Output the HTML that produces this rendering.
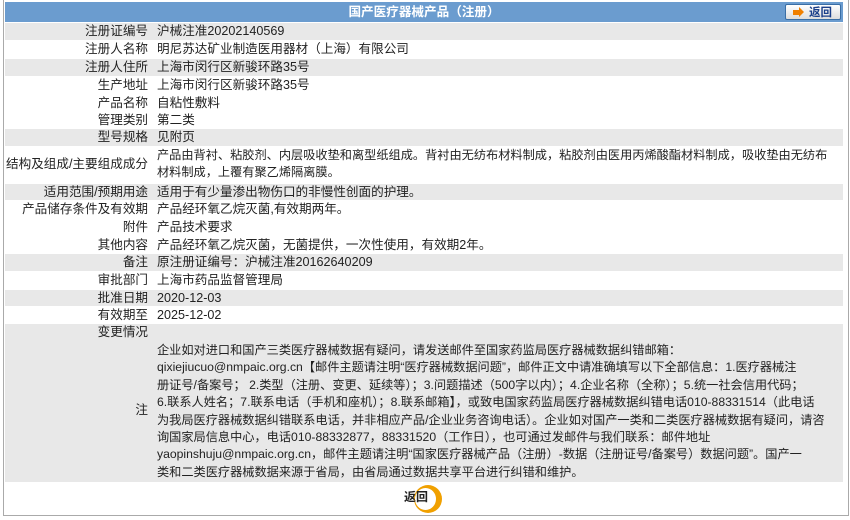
<!DOCTYPE html>
<html><head><meta charset="utf-8"><style>
body{margin:0;width:850px;height:520px;background:#fff;font-family:"Liberation Sans","Noto Sans CJK SC",sans-serif;font-size:12.6px;color:#222;position:relative;overflow:hidden}
.frame{position:absolute;left:3px;top:0;width:844px;height:515px;border-left:1px solid #aaa;border-right:1px solid #aaa;border-bottom:1px solid #aaa}
.hdr{position:absolute;left:5px;top:2px;width:838px;height:20px;background:#6b9ccf;color:#fff;font-weight:bold;text-align:center;line-height:20px;font-size:12.6px}
.btn{position:absolute;right:2px;top:2px;width:56px;height:16px;border:1px solid #3a6ea5;border-radius:2px;background:linear-gradient(#fff,#ddd);color:#1a3f8a;font-weight:bold;font-size:11.5px;line-height:16px;text-align:right;padding-right:8px;box-sizing:border-box}
.btn:before{content:"";position:absolute;left:7px;top:5px;width:6px;height:5px;background:#f08000}
.btn:after{content:"";position:absolute;left:13px;top:2px;border-left:5px solid #f08000;border-top:5.5px solid transparent;border-bottom:5.5px solid transparent}
.r{position:absolute;left:5px;width:838px;line-height:17.4px}
.g{background:#e8e8e8}
.l{position:absolute;left:0;width:143px;text-align:right;white-space:nowrap}
.v{position:absolute;left:152px;width:685px;white-space:nowrap}
.s{font-size:12.2px}
.ret{position:absolute;left:404px;top:488px;font-weight:bold;font-size:12px;color:#222}
.circ{position:absolute;left:414px;top:485px;width:28px;height:28px;border-radius:50%;background:#f0a000}
.circ:after{content:"";position:absolute;left:1px;top:3px;width:21px;height:22px;border-radius:50%;background:#fff}
</style></head><body>
<div class="frame"></div>
<div class="hdr">国产医疗器械产品（注册）<div class="btn">返回</div></div>
<div class="r g" style="top:23px;height:17px"><span class="l">注册证编号</span><span class="v">沪械注准20202140569</span></div>
<div class="r" style="top:41px;height:17px"><span class="l">注册人名称</span><span class="v">明尼苏达矿业制造医用器材（上海）有限公司</span></div>
<div class="r g" style="top:59px;height:17px"><span class="l">注册人住所</span><span class="v">上海市闵行区新骏环路35号</span></div>
<div class="r" style="top:77px;height:17px"><span class="l">生产地址</span><span class="v">上海市闵行区新骏环路35号</span></div>
<div class="r" style="top:95px;height:16px"><span class="l">产品名称</span><span class="v">自粘性敷料</span></div>
<div class="r" style="top:112px;height:16px"><span class="l">管理类别</span><span class="v">第二类</span></div>
<div class="r g" style="top:129px;height:17px"><span class="l">型号规格</span><span class="v">见附页</span></div>
<div class="r" style="top:147px;height:36px"><span class="l" style="top:9px;left:-4px;width:147px">结构及组成/主要组成成分</span><span class="v s">产品由背衬、粘胶剂、内层吸收垫和离型纸组成。背衬由无纺布材料制成，粘胶剂由医用丙烯酸酯材料制成，吸收垫由无纺布<br>材料制成，上覆有聚乙烯隔离膜。</span></div>
<div class="r g" style="top:184px;height:16px"><span class="l">适用范围/预期用途</span><span class="v">适用于有少量渗出物伤口的非慢性创面的护理。</span></div>
<div class="r" style="top:201px;height:17px"><span class="l">产品储存条件及有效期</span><span class="v">产品经环氧乙烷灭菌,有效期两年。</span></div>
<div class="r" style="top:219px;height:17px"><span class="l">附件</span><span class="v">产品技术要求</span></div>
<div class="r" style="top:237px;height:16px"><span class="l">其他内容</span><span class="v">产品经环氧乙烷灭菌，无菌提供，一次性使用，有效期2年。</span></div>
<div class="r g" style="top:254px;height:17px"><span class="l">备注</span><span class="v">原注册证编号：沪械注准20162640209</span></div>
<div class="r" style="top:272px;height:17px"><span class="l">审批部门</span><span class="v">上海市药品监督管理局</span></div>
<div class="r g" style="top:290px;height:16px"><span class="l">批准日期</span><span class="v">2020-12-03</span></div>
<div class="r" style="top:307px;height:16px"><span class="l">有效期至</span><span class="v">2025-12-02</span></div>
<div class="r g" style="top:324px;height:158px"><span class="l">变更情况</span><span class="l" style="top:78px">注</span><span class="v s" style="top:18px">企业如对进口和国产三类医疗器械数据有疑问，请发送邮件至国家药监局医疗器械数据纠错邮箱：<br>qixiejiucuo@nmpaic.org.cn【邮件主题请注明“医疗器械数据问题”，邮件正文中请准确填写以下全部信息：1.医疗器械注<br>册证号/备案号； 2.类型（注册、变更、延续等）；3.问题描述（500字以内）；4.企业名称（全称）；5.统一社会信用代码；<br>6.联系人姓名；7.联系电话（手机和座机）；8.联系邮箱】，或致电国家药监局医疗器械数据纠错电话010-88331514（此电话<br>为我局医疗器械数据纠错联系电话，并非相应产品/企业业务咨询电话）。企业如对国产一类和二类医疗器械数据有疑问，请咨<br>询国家局信息中心，电话010-88332877，88331520（工作日），也可通过发邮件与我们联系：邮件地址<br>yaopinshuju@nmpaic.org.cn，邮件主题请注明“国家医疗器械产品（注册）-数据（注册证号/备案号）数据问题”。国产一<br>类和二类医疗器械数据来源于省局，由省局通过数据共享平台进行纠错和维护。</span></div>
<div class="circ"></div>
<div class="ret">返回</div>
</body></html>
